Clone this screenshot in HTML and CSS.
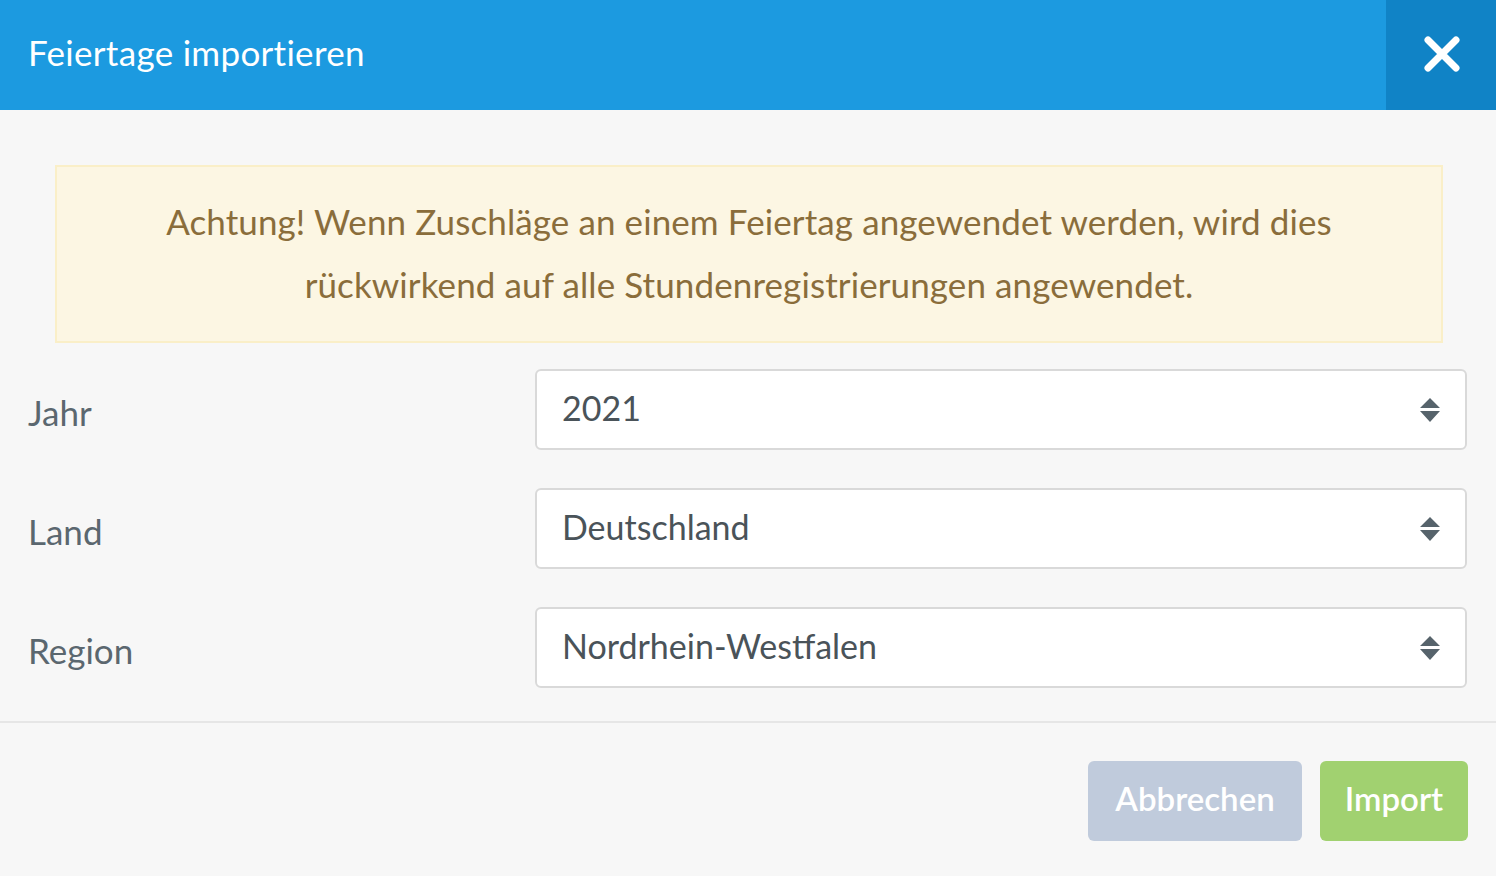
FILE: index.html
```html
<!DOCTYPE html>
<html lang="de">
<head>
<meta charset="utf-8">
<title>Feiertage importieren</title>
<link rel="stylesheet" href="styles.css">
</head>
<body>
<div class="modal">
  <div class="modal-header">
    <h1 class="modal-title">Feiertage importieren</h1>
    <button class="close-btn" aria-label="Schließen">
      <svg width="38" height="38" viewBox="0 0 38 38"><path d="M5 5 L33 33 M33 5 L5 33" stroke="#fff" stroke-width="7" stroke-linecap="round" fill="none"/></svg>
    </button>
  </div>
  <div class="modal-body">
    <div class="alert">Achtung! Wenn Zuschläge an einem Feiertag angewendet werden, wird dies<br>rückwirkend auf alle Stundenregistrierungen angewendet.</div>
    <div class="form">
      <div class="form-row">
        <label class="form-label">Jahr</label>
        <div class="select"><span class="select-value">2021</span><span class="caret"><svg width="20" height="26" viewBox="0 0 20 26"><path d="M10 1 L20 11 L0 11 Z M0 14 L20 14 L10 25 Z" fill="#56636b"/></svg></span></div>
      </div>
      <div class="form-row">
        <label class="form-label">Land</label>
        <div class="select"><span class="select-value">Deutschland</span><span class="caret"><svg width="20" height="26" viewBox="0 0 20 26"><path d="M10 1 L20 11 L0 11 Z M0 14 L20 14 L10 25 Z" fill="#56636b"/></svg></span></div>
      </div>
      <div class="form-row">
        <label class="form-label">Region</label>
        <div class="select"><span class="select-value">Nordrhein-Westfalen</span><span class="caret"><svg width="20" height="26" viewBox="0 0 20 26"><path d="M10 1 L20 11 L0 11 Z M0 14 L20 14 L10 25 Z" fill="#56636b"/></svg></span></div>
      </div>
    </div>
  </div>
  <div class="modal-footer">
    <button class="btn btn-cancel">Abbrechen</button>
    <button class="btn btn-import">Import</button>
  </div>
</div>
</body>
</html>
```
FILE: styles.css
```css
* { box-sizing: border-box; }
html, body { margin: 0; padding: 0; }
body {
  background: #f7f7f7;
  font-family: "Lato", "Open Sans", sans-serif;
  width: 1496px;
  height: 876px;
  overflow: hidden;
}
.modal { display: flex; flex-direction: column; height: 876px; }
.modal-header {
  height: 110px;
  background: #1c9ae0;
  display: flex;
  align-items: center;
  justify-content: space-between;
}
.modal-title {
  margin: 0 0 6px 0;
  padding-left: 28px;
  color: #fff;
  font-weight: 400;
  font-size: 35px;
  letter-spacing: 0.3px;
}
.close-btn {
  width: 110px;
  height: 110px;
  border: 0;
  padding: 0;
  background: #1083c6;
  display: flex;
  align-items: center;
  justify-content: center;
  cursor: pointer;
}
.close-btn svg { margin-left: 2px; margin-bottom: 2px; }
.modal-body {
  padding: 55px 29px 33px 29px;
  border-bottom: 2px solid #e6e6e6;
}
.alert {
  margin: 0 24px 0 26px;
  height: 178px;
  background: #fcf6e3;
  border: 2px solid #faefc8;
  color: #8a6d3b;
  font-size: 35px;
  line-height: 63px;
  text-align: center;
  padding-top: 23px;
  letter-spacing: 0.1px;
}
.form { margin-top: 26px; display: flex; flex-direction: column; gap: 38px; }
.form-row {
  display: grid;
  grid-template-columns: 506px 1fr;
  align-items: center;
}
.form-label {
  color: #5b676f;
  font-size: 35px;
  padding-top: 5px;
  padding-left: 0;
  margin-left: -1px;
}
.select {
  height: 81px;
  background: #fff;
  border: 2px solid #d9d9d9;
  border-radius: 6px;
  display: flex;
  align-items: center;
  justify-content: space-between;
  padding: 0 25px 0 25px;
  color: #4a5359;
  font-size: 34px;
}
.select-value { margin-top: -4px; }
.caret { display: flex; }
.modal-footer {
  flex: 1;
  display: flex;
  justify-content: flex-end;
  align-items: flex-start;
  gap: 18px;
  padding: 38px 28px 0 0;
}
.btn {
  height: 80px;
  border: 0;
  border-radius: 6px;
  color: #fff;
  font-family: inherit;
  font-size: 33px;
  font-weight: 600;
  cursor: pointer;
  padding: 0 0 6px 0;
}
.btn-cancel { width: 214px; background: #c0cbdc; }
.btn-import { width: 148px; background: #a1d170; }
```
